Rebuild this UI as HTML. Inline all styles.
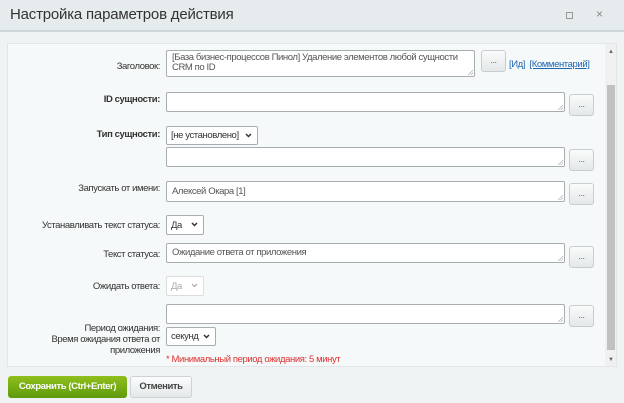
<!DOCTYPE html>
<html><head><meta charset="utf-8"><style>
*{box-sizing:border-box;margin:0;padding:0}
body{width:624px;height:403px;overflow:hidden;background:#f0f3f4;font-family:"Liberation Sans",sans-serif;font-size:9.5px;color:#333;position:relative;letter-spacing:-0.4px}
.a{position:absolute}
.hdr{left:0;top:0;width:624px;height:32px;background:#e6ecee;border-bottom:2px solid #cfd6d9}
.hdr .t{left:10px;top:6px;font-size:15px;color:#333;letter-spacing:-0.2px}
.panel{left:7px;top:43px;width:610px;height:324px;background:#f6f9f9;border:1px solid #e2e6e7}
.lbl{text-align:right;width:158px;left:2px}
.b{font-weight:bold}
.ta{background:#fff;border:1px solid #a8adaf;border-radius:2px;padding:2px 5px;color:#555;line-height:10px}
.ta:after{content:"";position:absolute;right:1px;bottom:1px;width:5px;height:5px;background:linear-gradient(135deg,transparent 45%,#999 50%,transparent 60%,transparent 70%,#999 75%,transparent 85%)}
.btn{width:25px;height:22px;border:1px solid #c8cdcf;border-radius:3px;background:linear-gradient(#fafbfb,#e4e8e9);text-align:center;line-height:18px;color:#666;font-size:9px}
.sel{background:#fff;border:1px solid #a8adaf;border-radius:2px;padding:3px 4px;color:#333}
.sel svg{position:absolute;right:5px;top:6px}
a{color:#2067b0}
</style></head><body>
<div class="a hdr"><div class="a t">Настройка параметров действия</div>
<div class="a" style="left:566px;top:12px;width:7px;height:7px;border:1px solid #999"></div>
<div class="a" style="left:596px;top:7px;font-size:12px;color:#888">×</div></div>
<div class="a panel"></div>
<div class="a" style="left:605px;top:44px;width:11px;height:322px;background:#f0f0f0"></div>
<div class="a" style="left:607px;top:85px;width:8px;height:265px;background:#c1c1c1"></div>
<div class="a" style="left:608px;top:49px;font-size:6px;color:#666">▲</div>
<div class="a" style="left:608px;top:357px;font-size:6px;color:#666">▼</div>

<div class="a lbl" style="top:61px">Заголовок:</div>
<div class="a ta" style="left:166px;top:50px;width:309px;height:27px">[База бизнес-процессов Пинол] Удаление элементов любой сущности CRM по ID</div>
<div class="a btn" style="left:481px;top:50px">...</div>
<div class="a" style="left:509px;top:59px"><a>[Ид]</a>&nbsp; <a style="text-decoration:underline">[Комментарий]</a></div>

<div class="a lbl b" style="top:94px">ID сущности:</div>
<div class="a ta" style="left:166px;top:92px;width:399px;height:20px"></div>
<div class="a btn" style="left:569px;top:94px">...</div>

<div class="a lbl b" style="top:129px">Тип сущности:</div>
<div class="a sel" style="left:166px;top:126px;width:92px;height:19px">[не установлено]<svg width="7" height="5" viewBox="0 0 7 5"><path d="M1 1l2.5 2.5L6 1" stroke="#333" stroke-width="1.5" fill="none"/></svg></div>
<div class="a ta" style="left:166px;top:147px;width:399px;height:20px"></div>
<div class="a btn" style="left:569px;top:149px">...</div>

<div class="a lbl" style="top:183px">Запускать от имени:</div>
<div class="a ta" style="left:166px;top:181px;width:399px;height:21px;padding-top:5px">Алексей Окара [1]</div>
<div class="a btn" style="left:569px;top:183px">...</div>

<div class="a lbl" style="top:220px">Устанавливать текст статуса:</div>
<div class="a sel" style="left:166px;top:215px;width:38px;height:20px;padding-top:4px">Да<svg width="7" height="5" viewBox="0 0 7 5"><path d="M1 1l2.5 2.5L6 1" stroke="#333" stroke-width="1.5" fill="none"/></svg></div>

<div class="a lbl" style="top:249px">Текст статуса:</div>
<div class="a ta" style="left:166px;top:243px;width:399px;height:20px;padding-top:4px">Ожидание ответа от приложения</div>
<div class="a btn" style="left:569px;top:246px">...</div>

<div class="a lbl" style="top:281px">Ожидать ответа:</div>
<div class="a sel" style="left:166px;top:276px;width:38px;height:20px;padding-top:4px;color:#aaa;border-color:#ddd">Да<svg width="7" height="5" viewBox="0 0 7 5"><path d="M1 1l2.5 2.5L6 1" stroke="#aaa" stroke-width="1.2" fill="none"/></svg></div>

<div class="a ta" style="left:166px;top:304px;width:399px;height:20px"></div>
<div class="a btn" style="left:569px;top:305px">...</div>

<div class="a lbl" style="top:323px;line-height:11px">Период ожидания:<br>Время ожидания ответа от<br>приложения</div>
<div class="a sel" style="left:166px;top:327px;width:50px;height:19px">секунд<svg width="7" height="5" viewBox="0 0 7 5"><path d="M1 1l2.5 2.5L6 1" stroke="#333" stroke-width="1.5" fill="none"/></svg></div>
<div class="a" style="left:166px;top:354px;color:#d33;font-size:9.5px">* Минимальный период ожидания: 5 минут</div>

<div class="a" style="left:8px;top:376px;width:119px;height:22px;background:linear-gradient(#8fbf1c,#5e9a0c);border-radius:3px;color:#fff;font-weight:bold;text-align:center;line-height:22px">Сохранить (Ctrl+Enter)</div>
<div class="a" style="left:130px;top:376px;width:62px;height:22px;background:linear-gradient(#fcfdfd,#e3e8ea);border:1px solid #cdd3d5;border-radius:3px;font-weight:bold;text-align:center;line-height:20px;color:#444">Отменить</div>
</body></html>
